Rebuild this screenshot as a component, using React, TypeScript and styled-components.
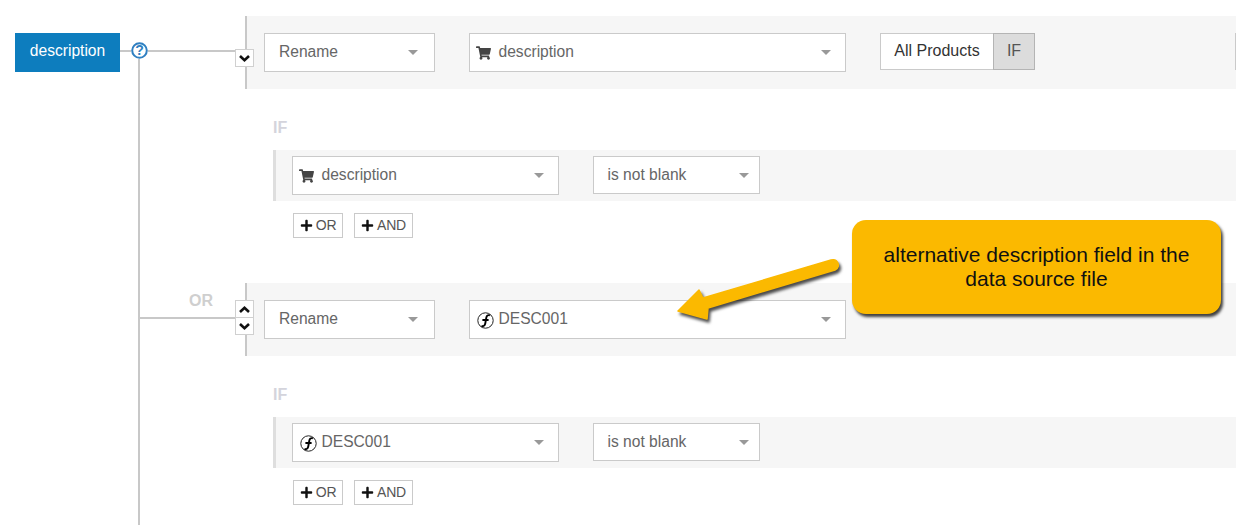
import React from "react";
import styled, { createGlobalStyle } from "styled-components";
import { FaPlus, FaShoppingCart } from "react-icons/fa";

const Global = createGlobalStyle`
  html, body {
    margin: 0;
    padding: 0;
    background: #fff;
  }
  body {
    font-family: "Liberation Sans", Arial, sans-serif;
  }
`;

const Page = styled.div`
  position: relative;
  display: flex;
  width: 1236px;
  height: 525px;
  overflow: hidden;
  background: #fff;
`;

const Tree = styled.div`
  flex: none;
  display: flex;
  flex-direction: column;
  width: 245px;
  padding-top: 33px;
  box-sizing: border-box;
`;

const TagRow = styled.div`
  display: flex;
  align-items: flex-start;
  margin-left: 15px;
`;

const Tag = styled.div`
  flex: none;
  width: 105px;
  height: 39px;
  line-height: 35px;
  text-align: center;
  font-size: 15.6px;
  color: #fff;
  background: #0d7dbe;
`;

const Link = styled.div`
  flex: 1;
  height: 2px;
  margin-top: 17px;
  background: #c8c8c8;
`;

const ShortLink = styled(Link)`
  flex: none;
  width: 11px;
`;

const HelpIcon = styled.svg`
  flex: none;
  width: 17px;
  height: 17px;
  margin-top: 9px;
`;

const Trunk = styled.div`
  flex: 1;
  margin: -13px 0 0 138px;
  padding-top: 232px;
  border-left: 2px solid #c8c8c8;
`;

const OrLabel = styled.div`
  margin: 0 0 6px 49px;
  line-height: 20px;
  font-size: 16px;
  font-weight: bold;
  color: #cfcfcf;
`;

const BranchLine = styled.div`
  height: 2px;
  background: #c8c8c8;
`;

const Rules = styled.div`
  flex: 1;
  min-width: 0;
  padding-top: 16px;
`;

const RuleHead = styled.div`
  position: relative;
  display: flex;
  align-items: flex-start;
  gap: 34px;
  height: 73px;
  padding: 17px 0 0 17px;
  box-sizing: border-box;
  border-left: 2px solid #c8c8c8;
  background: #f6f6f6;
`;

const Movers = styled.div<{ $top: number }>`
  position: absolute;
  left: -12px;
  top: ${(p) => p.$top}px;
  display: flex;
  flex-direction: column;
`;

const Mover = styled.div`
  display: flex;
  align-items: center;
  justify-content: center;
  width: 19px;
  height: 18px;
  box-sizing: border-box;
  margin-bottom: -1px;
  border: 1px solid #d0d0d0;
  background: #fff;
`;

const ChevronIcon = styled.svg<{ $up?: boolean }>`
  width: 11px;
  height: 7px;
  transform: ${(p) => (p.$up ? "none" : "scaleY(-1)")};
`;

const Select = styled.div<{ $width: number; $height?: number; $inset?: number; $caretInset?: number }>`
  flex: none;
  display: flex;
  align-items: center;
  width: ${(p) => p.$width}px;
  height: ${(p) => p.$height ?? 39}px;
  padding: 0 ${(p) => p.$caretInset ?? 16}px 1px ${(p) => p.$inset ?? 14}px;
  box-sizing: border-box;
  border: 1px solid #cacaca;
  background: #fff;
  font-size: 15.6px;
  color: #666;
`;

const SelectLabel = styled.span`
  flex: 1;
  white-space: nowrap;
`;

const Caret = styled.span`
  flex: none;
  width: 0;
  height: 0;
  margin-top: 1px;
  border-left: 5px solid transparent;
  border-right: 5px solid transparent;
  border-top: 5px solid #999;
`;

const CartIcon = styled(FaShoppingCart)`
  flex: none;
  width: 15px;
  height: 14px;
  margin: 2px 7.5px 0 0;
  color: #444;
`;

const FnIconSvg = styled.svg`
  flex: none;
  width: 17px;
  height: 17px;
  margin: 2px 4.5px 0 1px;
`;

const Toggle = styled.div`
  flex: none;
  display: flex;
  height: 37px;
`;

const ToggleOption = styled.div<{ $active?: boolean }>`
  display: flex;
  align-items: center;
  justify-content: center;
  width: ${(p) => (p.$active ? 42 : 113)}px;
  padding-bottom: 1px;
  box-sizing: border-box;
  border: 1px solid ${(p) => (p.$active ? "#b4b4b4" : "#cacaca")};
  border-right-width: ${(p) => (p.$active ? 1 : 0)}px;
  background: ${(p) => (p.$active ? "#dcdcdc" : "#fff")};
  color: ${(p) => (p.$active ? "#555" : "#333")};
  font-size: 16px;
`;

const NextOption = styled.div`
  flex: none;
  width: 60px;
  height: 37px;
  margin-left: 166px;
  box-sizing: border-box;
  border: 1px solid #cacaca;
  background: #fff;
`;

const Conditions = styled.div`
  padding: 29px 0 45px 28px;
`;

const IfLabel = styled.div`
  margin-bottom: 12px;
  line-height: 20px;
  font-size: 16px;
  font-weight: bold;
  color: #d4d4dc;
`;

const ConditionRow = styled.div`
  display: flex;
  align-items: flex-start;
  gap: 34px;
  height: 51px;
  padding: 6px 0 0 16px;
  box-sizing: border-box;
  border-left: 3px solid #dedede;
  background: #f6f6f6;
`;

const AddRow = styled.div`
  display: flex;
  gap: 11px;
  margin: 12px 0 0 20px;
`;

const AddButton = styled.div<{ $width: number }>`
  display: flex;
  align-items: center;
  justify-content: center;
  gap: 3px;
  width: ${(p) => p.$width}px;
  height: 25px;
  padding-bottom: 2px;
  box-sizing: border-box;
  border: 1px solid #cacaca;
  background: #fff;
  font-size: 14px;
  letter-spacing: -0.2px;
  color: #555;

  svg {
    width: 13px;
    height: 13px;
    margin-top: 2px;
    color: #111;
  }
`;

const Callout = styled.div`
  position: absolute;
  left: 852px;
  top: 220px;
  width: 369px;
  height: 94px;
  padding-top: 23px;
  box-sizing: border-box;
  border-radius: 14px;
  background: #fbb900;
  box-shadow: 2px 3px 3px rgba(0, 0, 0, 0.75);
  text-align: center;
  font-size: 21px;
  line-height: 24px;
  color: #111;
`;

const Arrow = styled.svg`
  position: absolute;
  left: 670px;
  top: 255px;
  width: 175px;
  height: 70px;
  overflow: visible;
  filter: drop-shadow(2px 3px 1.5px rgba(0, 0, 0, 0.7));
`;

function HelpGlyph() {
  return (
    <HelpIcon viewBox="0 0 17 17">
      <circle cx="8.5" cy="8.5" r="7.3" fill="#fff" stroke="#2f7fc1" strokeWidth="2" />
      <text x="8.5" y="13.4" textAnchor="middle" fontSize="14" fontWeight="bold" fill="#2f7fc1" fontFamily="Liberation Sans">
        ?
      </text>
    </HelpIcon>
  );
}

function FnIcon() {
  return (
    <FnIconSvg viewBox="0 0 17 17">
      <circle cx="8.5" cy="8.5" r="7.7" fill="none" stroke="#222" strokeWidth="1" />
      <path d="M4.5 14c2.4.8 3.4-.8 3.8-2.8l1-5.6c.4-2 1.6-3 3.6-2.2M5.4 8h6.2" fill="none" stroke="#000" strokeWidth="1.9" />
    </FnIconSvg>
  );
}

function Chevron({ up }: { up?: boolean }) {
  return (
    <ChevronIcon $up={up} viewBox="0 0 11 7">
      <polyline points="1,6 5.5,1.8 10,6" fill="none" stroke="#111" strokeWidth="2.6" />
    </ChevronIcon>
  );
}

function Field({ width, height, icon, label }: { width: number; height?: number; icon?: "cart" | "fn"; label: string }) {
  return (
    <Select $width={width} $height={height} $inset={icon ? 6 : 14} $caretInset={icon ? 14 : 16}>
      {icon === "cart" && <CartIcon />}
      {icon === "fn" && <FnIcon />}
      <SelectLabel>{label}</SelectLabel>
      <Caret />
    </Select>
  );
}

function BlankTest() {
  return (
    <Select $width={167} $height={38} $inset={13.5} $caretInset={10}>
      <SelectLabel>is not blank</SelectLabel>
      <Caret />
    </Select>
  );
}

function Rule({ icon, field, moveUp, children }: { icon: "cart" | "fn"; field: string; moveUp?: boolean; children?: React.ReactNode }) {
  return (
    <>
      <RuleHead>
        <Movers $top={moveUp ? 17 : 33}>
          {moveUp && (
            <Mover>
              <Chevron up />
            </Mover>
          )}
          <Mover>
            <Chevron />
          </Mover>
        </Movers>
        <Field width={171} label="Rename" />
        <Field width={377} icon={icon} label={field} />
        {children}
      </RuleHead>
      <Conditions>
        <IfLabel>IF</IfLabel>
        <ConditionRow>
          <Field width={267} icon={icon} label={field} />
          <BlankTest />
        </ConditionRow>
        <AddRow>
          <AddButton $width={50}>
            <FaPlus />
            OR
          </AddButton>
          <AddButton $width={59}>
            <FaPlus />
            AND
          </AddButton>
        </AddRow>
      </Conditions>
    </>
  );
}

export default function App() {
  return (
    <Page>
      <Global />
      <Tree>
        <TagRow>
          <Tag>description</Tag>
          <ShortLink />
          <HelpGlyph />
          <Link />
        </TagRow>
        <Trunk>
          <OrLabel>OR</OrLabel>
          <BranchLine />
        </Trunk>
      </Tree>
      <Rules>
        <Rule icon="cart" field="description">
          <Toggle>
            <ToggleOption>All Products</ToggleOption>
            <ToggleOption $active>IF</ToggleOption>
          </Toggle>
          <NextOption />
        </Rule>
        <Rule icon="fn" field="DESC001" moveUp />
      </Rules>
      <Arrow viewBox="0 0 175 70">
        <path
          d="M8 56 L29 35 L33 43 L161 5 C168 3 171 12 165 15 L38 53 L37 64 Z"
          fill="#fbb900"
          stroke="#fbb900"
          strokeWidth="1.5"
          strokeLinejoin="round"
        />
      </Arrow>
      <Callout>
        alternative description field in the
        <br />
        data source file
      </Callout>
    </Page>
  );
}
